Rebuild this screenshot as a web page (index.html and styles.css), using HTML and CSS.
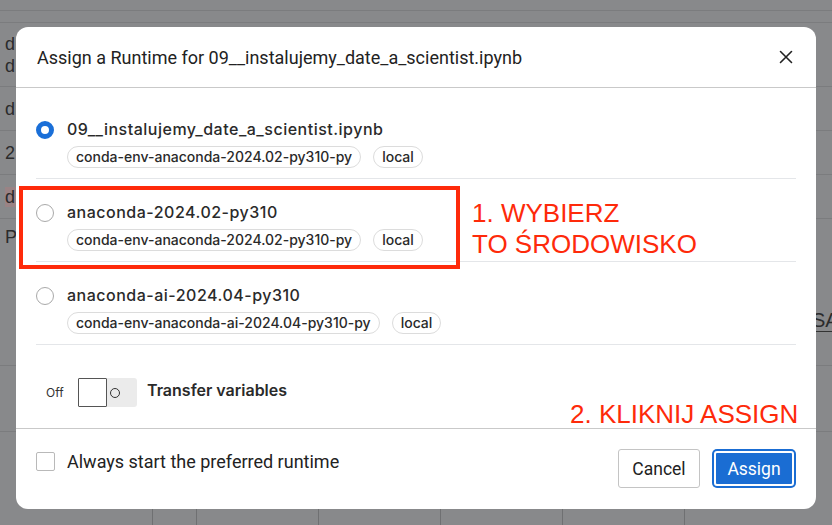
FILE: index.html
```html
<!DOCTYPE html>
<html lang="en">
<head>
<meta charset="utf-8">
<title>Assign a Runtime</title>
<link rel="stylesheet" href="styles.css">
</head>
<body>
<div class="page">
  <div class="bg-row bg-r1"></div>
  <div class="bg-row bg-r2"></div>
  <div class="bg-row bg-r3"><span class="bg-ch">d</span><span class="bg-ch">d</span></div>
  <div class="bg-row bg-r4"><span class="bg-ch">d</span></div>
  <div class="bg-row bg-r5"><span class="bg-ch">2</span></div>
  <div class="bg-row bg-r6"><span class="bg-ch pink">d</span></div>
  <div class="bg-row bg-r7"><span class="bg-ch">P</span><span class="bg-sa">SA</span></div>
  <div class="bg-row bg-r8"></div>
  <div class="bg-row bg-r9"></div>
  <div class="bg-grid">
    <span class="bg-val">1.50</span>
    <span class="bg-col first"></span><span class="bg-col"></span><span class="bg-col"></span><span class="bg-col"></span><span class="bg-col"></span><span class="bg-col"></span>
  </div>
</div>

<div class="overlay">
  <div class="dialog">
    <header class="dlg-head">
      <h1 class="dlg-title">Assign a Runtime for 09__instalujemy_date_a_scientist.ipynb</h1>
      <button class="close-btn" aria-label="Close">
        <svg width="14" height="14" viewBox="0 0 14 14"><path d="M1.5 1.5 L12.5 12.5 M12.5 1.5 L1.5 12.5" stroke="#222" stroke-width="1.6" stroke-linecap="round" fill="none"/></svg>
      </button>
    </header>

    <div class="dlg-body">
      <ul class="options">
        <li class="option">
          <span class="radio checked"></span>
          <div class="opt-main">
            <div class="opt-name">09__instalujemy_date_a_scientist.ipynb</div>
            <div class="tags"><span class="tag">conda-env-anaconda-2024.02-py310-py</span><span class="tag">local</span></div>
          </div>
        </li>
        <li class="option">
          <span class="radio"></span>
          <div class="opt-main">
            <div class="opt-name">anaconda-2024.02-py310</div>
            <div class="tags"><span class="tag">conda-env-anaconda-2024.02-py310-py</span><span class="tag">local</span></div>
          </div>
        </li>
        <li class="option">
          <span class="radio"></span>
          <div class="opt-main">
            <div class="opt-name">anaconda-ai-2024.04-py310</div>
            <div class="tags"><span class="tag">conda-env-anaconda-ai-2024.04-py310-py</span><span class="tag">local</span></div>
          </div>
        </li>
      </ul>

      <div class="transfer">
        <span class="off">Off</span>
        <span class="toggle"><span class="toggle-box"></span><span class="toggle-o"></span></span>
        <span class="transfer-label">Transfer variables</span>
      </div>
    </div>

    <footer class="dlg-foot">
      <label class="always"><span class="checkbox"></span><span class="always-text">Always start the preferred runtime</span></label>
      <div class="actions">
        <button class="btn btn-cancel">Cancel</button>
        <button class="btn btn-assign">Assign</button>
      </div>
    </footer>

    <div class="anno-box"></div>
    <div class="anno anno-1">1. WYBIERZ<br>TO ŚRODOWISKO</div>
    <div class="anno anno-2">2. KLIKNIJ ASSIGN</div>
  </div>
</div>
</body>
</html>
```
FILE: styles.css
```css
* { box-sizing: border-box; }
html, body { margin: 0; padding: 0; }
body {
  width: 832px;
  height: 525px;
  overflow: hidden;
  background: #88898b;
  font-family: Roboto, "Liberation Sans", sans-serif;
  position: relative;
}

/* background page (dimmed) */
.page {
  height: 525px;
  display: flex;
  flex-direction: column;
}
.bg-row {
  border-bottom: 1px solid #7b7c7e;
  display: flex;
  flex-direction: column;
  justify-content: center;
  padding-left: 5px;
  font-family: "Liberation Sans", sans-serif;
  font-size: 18px;
  color: #2b2b2c;
  position: relative;
  flex: none;
}
.bg-r1 { height: 10px; border-bottom: none; }
.bg-r2 { height: 13px; border-top: 1px solid #7b7c7e; }
.bg-r3 { height: 64px; gap: 2px; }
.bg-r4 { height: 44px; }
.bg-r5 { height: 44px; }
.bg-r6 { height: 44px; }
.bg-r7 { height: 36px; border-bottom: none; }
.bg-r8 { height: 111px; }
.bg-r9 { height: 66px; }
.bg-ch { line-height: 20px; }
.bg-ch.pink { background: #9a8385; width: 12px; }
.bg-sa {
  position: absolute;
  left: 812px;
  top: 90px;
  font-size: 20px;
  border-bottom: 1.5px solid #333;
  line-height: 22px;
  width: 40px;
}
.bg-grid {
  flex: 1;
  display: flex;
  padding-left: 152px;
  position: relative;
}
.bg-val { position: absolute; left: 100px; top: 2px; font-size: 14px; color: #444; }
.bg-col { width: 122px; flex: none; border-left: 1px solid #6f7072; }
.bg-col.first { width: 44px; }

/* overlay + dialog */
.overlay {
  position: absolute;
  inset: 0;
  padding: 27px 16px 0 16px;
}
.dialog {
  position: relative;
  width: 800px;
  height: 482px;
  background: #fff;
  border-radius: 12px;
  display: flex;
  flex-direction: column;
}
.dlg-head {
  height: 61px;
  flex: none;
  border-bottom: 1px solid #c9c9c9;
  display: flex;
  align-items: center;
  justify-content: space-between;
  padding: 0 22px 0 21px;
}
.dlg-title {
  margin: 0;
  font-family: Roboto, sans-serif;
  font-weight: 400;
  font-size: 18px;
  color: #222;
}
.close-btn {
  border: none;
  background: none;
  padding: 0;
  width: 16px;
  height: 16px;
  display: flex;
  align-items: center;
  justify-content: center;
}

.dlg-body {
  flex: 1;
  padding: 8px 20px 0 20px;
  display: flex;
  flex-direction: column;
}
.options { list-style: none; margin: 0; padding: 0; }
.option {
  height: 83px;
  border-bottom: 1px solid #e4e6e9;
  display: grid;
  grid-template-columns: 18px 1fr;
  column-gap: 13px;
  padding-top: 23px;
}
.radio {
  width: 18px;
  height: 18px;
  border-radius: 50%;
  border: 1px solid #a9a9a9;
  margin-top: 2px;
  background: #fff;
}
.radio.checked { border: 5px solid #1a6fd8; }
.opt-main { display: flex; flex-direction: column; gap: 7px; }
.opt-name {
  font-family: Inter, sans-serif;
  font-weight: 500;
  font-size: 16px;
  letter-spacing: 0.5px;
  line-height: 20px;
  color: #2a2a2a;
}
.tags { display: flex; gap: 12px; }
.tag {
  height: 22px;
  border: 1px solid #dcdcdc;
  border-radius: 11px;
  padding: 0 8px;
  font-family: Inter, sans-serif;
  font-weight: 500;
  font-size: 14px;
  line-height: 20px;
  color: #2a2a2a;
}

.transfer {
  flex: 1;
  display: flex;
  align-items: flex-start;
  padding: 33px 0 0 10px;
}
.off {
  font-family: Inter, sans-serif;
  font-size: 12px;
  line-height: 29px;
  color: #333;
  width: 32px;
}
.toggle {
  width: 59px;
  height: 29px;
  background: #ebebeb;
  border-radius: 3px;
  display: flex;
  align-items: center;
}
.toggle-box {
  width: 29px;
  height: 29px;
  border: 1px solid #555;
  background: #fff;
  border-radius: 1px;
}
.toggle-o {
  width: 10px;
  height: 10px;
  border: 1.3px solid #333;
  border-radius: 50%;
  margin-left: 3px;
}
.transfer-label {
  margin-left: 10px;
  line-height: 25px;
  font-family: Inter, sans-serif;
  font-weight: 600;
  font-size: 16px;
  color: #2a2a2a;
}

.dlg-foot {
  height: 81px;
  flex: none;
  border-top: 1px solid #c9c9c9;
  display: flex;
  justify-content: space-between;
  align-items: flex-start;
  padding: 20px 20px 0 20px;
}
.always {
  display: flex;
  align-items: center;
  gap: 12px;
  margin-top: 3px;
  font-family: Roboto, sans-serif;
  font-size: 18px;
  line-height: 19px;
  color: #222;
}
.checkbox {
  flex: none;
  width: 19px;
  height: 19px;
  border: 1px solid #b9b9b9;
  border-radius: 2px;
}
.actions { display: flex; gap: 14px; align-items: center; }
.btn {
  font-family: Roboto, sans-serif;
  font-size: 17.5px;
  border-radius: 3px;
  padding: 0;
}
.btn-cancel {
  width: 82px;
  height: 39px;
  border: 1px solid #c4c4c4;
  background: #fff;
  color: #222;
}
.btn-assign {
  width: 80px;
  height: 35px;
  margin-right: 2px;
  border: 2px solid #fff;
  background: #1a6dd3;
  color: #fff;
  box-shadow: 0 0 0 2px #1a6dd3;
}

/* annotations */
.anno-box {
  position: absolute;
  left: 3px;
  top: 159px;
  width: 441px;
  height: 83px;
  border: 4px solid #fe2a0a;
}
.anno {
  position: absolute;
  font-family: "Liberation Sans", Arial, sans-serif;
  font-size: 26px;
  line-height: 31px;
  color: #fe2a0a;
  white-space: nowrap;
}
.anno-1 { left: 456px; top: 171px; }
.anno-2 { left: 554px; top: 372px; }
```
